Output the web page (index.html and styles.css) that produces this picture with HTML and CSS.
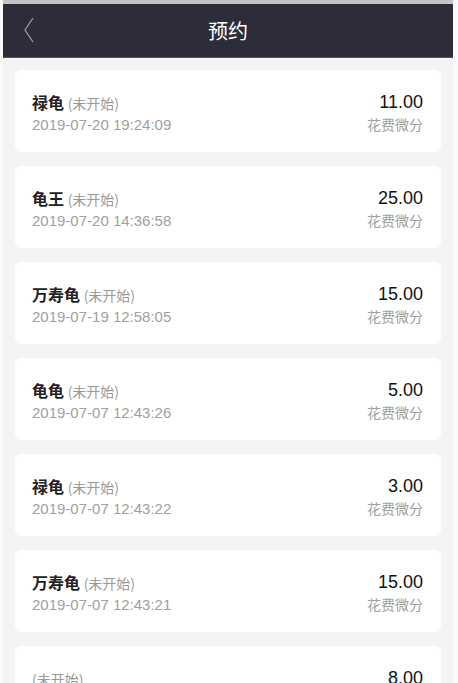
FILE: index.html
```html
<!DOCTYPE html>
<html lang="zh-CN">
<head>
    <meta charset="UTF-8">
    <meta name="viewport" content="width=device-width, initial-scale=1.0">
    <title>预约</title>
    <link rel="stylesheet" href="styles.css">
</head>
<body>
<div class="page">
    <div class="header">
        <span class="back">
            <svg width="12" height="26" viewBox="0 0 12 26"><path d="M10 1 L2 13 L10 25" fill="none" stroke="#9a9aa3" stroke-width="1.3"/></svg>
        </span>
        <h1>预约</h1>
    </div>
    <div class="list">
        <div class="card">
            <div class="info">
                <div class="name">禄龟 <span class="status">(未开始)</span></div>
                <div class="time">2019-07-20 19:24:09</div>
            </div>
            <div class="cost">
                <div class="price">11.00</div>
                <div class="unit">花费微分</div>
            </div>
        </div>
        <div class="card">
            <div class="info">
                <div class="name">龟王 <span class="status">(未开始)</span></div>
                <div class="time">2019-07-20 14:36:58</div>
            </div>
            <div class="cost">
                <div class="price">25.00</div>
                <div class="unit">花费微分</div>
            </div>
        </div>
        <div class="card">
            <div class="info">
                <div class="name">万寿龟 <span class="status">(未开始)</span></div>
                <div class="time">2019-07-19 12:58:05</div>
            </div>
            <div class="cost">
                <div class="price">15.00</div>
                <div class="unit">花费微分</div>
            </div>
        </div>
        <div class="card">
            <div class="info">
                <div class="name">龟龟 <span class="status">(未开始)</span></div>
                <div class="time">2019-07-07 12:43:26</div>
            </div>
            <div class="cost">
                <div class="price">5.00</div>
                <div class="unit">花费微分</div>
            </div>
        </div>
        <div class="card">
            <div class="info">
                <div class="name">禄龟 <span class="status">(未开始)</span></div>
                <div class="time">2019-07-07 12:43:22</div>
            </div>
            <div class="cost">
                <div class="price">3.00</div>
                <div class="unit">花费微分</div>
            </div>
        </div>
        <div class="card">
            <div class="info">
                <div class="name">万寿龟 <span class="status">(未开始)</span></div>
                <div class="time">2019-07-07 12:43:21</div>
            </div>
            <div class="cost">
                <div class="price">15.00</div>
                <div class="unit">花费微分</div>
            </div>
        </div>
        <div class="card">
            <div class="info">
                <div class="name"><span class="status">(未开始)</span></div>
            </div>
            <div class="cost">
                <div class="price">8.00</div>
            </div>
        </div>
    </div>
</div>
</body>
</html>
```

FILE: styles.css
```css
body {
    margin: 0;
    background-color: #fafafa;
    font-family: "Liberation Sans", "Noto Sans CJK SC", sans-serif;
    overflow: hidden;
}

.page {
    width: 450px;
    margin-left: 3px;
    border-top: 4px solid #c4c4c6;
    background-color: #f4f4f4;
    min-height: 700px;
}

.header {
    position: relative;
    height: 53px;
    background-color: #2d2c39;
    border-bottom: 1px solid #55545e;
    display: flex;
    align-items: center;
    justify-content: center;
}

.header h1 {
    margin: 0;
    color: #fff;
    font-size: 20px;
    font-weight: normal;
    font-family: "Noto Sans CJK SC", sans-serif;
}

.back {
    position: absolute;
    left: 20px;
    top: 13px;
}

.list {
    padding: 12px 12px 0 12px;
    display: flex;
    flex-direction: column;
    gap: 14px;
}

.card {
    height: 82px;
    box-sizing: border-box;
    background-color: #fff;
    border-radius: 6px;
    padding: 21px 18px 0 17px;
    display: flex;
    justify-content: space-between;
}

.name {
    font-family: "Noto Sans CJK SC", sans-serif;
    font-size: 16px;
    font-weight: bold;
    color: #222;
    line-height: 22px;
}

.status {
    font-size: 14px;
    font-weight: normal;
    color: #999;
}

.time {
    margin-top: 1px;
    font-size: 15px;
    color: #a0a0a0;
    line-height: 20px;
}

.cost {
    text-align: right;
}

.price {
    font-size: 18px;
    color: #111;
    line-height: 22px;
}

.unit {
    margin-top: 1px;
    font-family: "Noto Sans CJK SC", sans-serif;
    font-size: 14px;
    color: #a0a0a0;
    line-height: 20px;
}
```
